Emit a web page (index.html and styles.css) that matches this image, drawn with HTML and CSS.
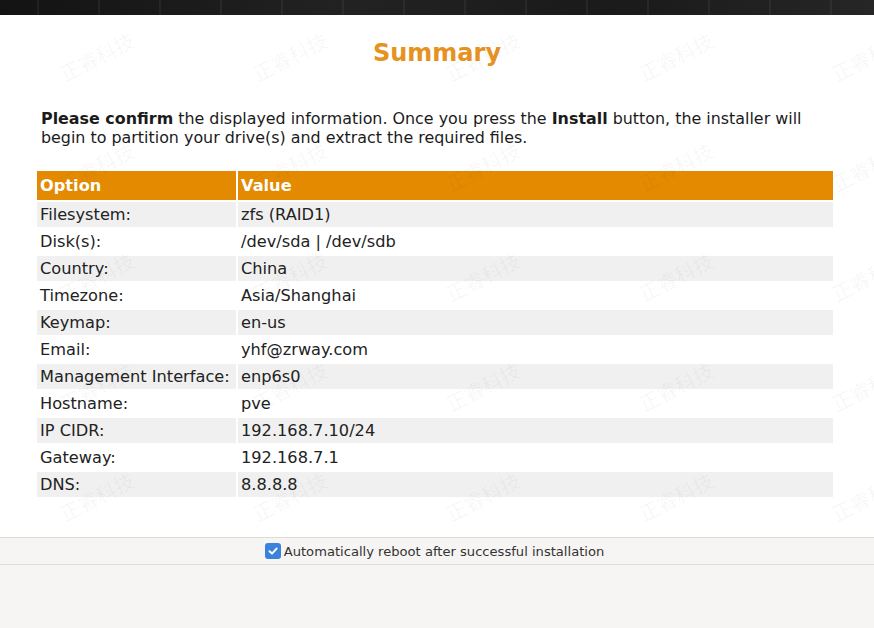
FILE: index.html
```html
<!DOCTYPE html>
<html lang="en">

<head>
    <meta charset="UTF-8">
    <meta name="viewport" content="width=device-width, initial-scale=1.0">
    <title>Summary</title>
    <link rel="stylesheet" href="styles.css">
</head>

<body>
    <div class="topbar"></div>

    <main class="content">
        <h1 class="title">Summary</h1>
        <p class="intro">
            <b>Please confirm</b> the displayed information. Once you press the <b>Install</b> button, the installer will
            begin to partition your drive(s) and extract the required files.
        </p>

        <table class="summary">
            <thead>
                <tr>
                    <th class="opt">Option</th>
                    <th>Value</th>
                </tr>
            </thead>
            <tbody>
                <tr><td>Filesystem:</td><td>zfs (RAID1)</td></tr>
                <tr><td>Disk(s):</td><td>/dev/sda | /dev/sdb</td></tr>
                <tr><td>Country:</td><td>China</td></tr>
                <tr><td>Timezone:</td><td>Asia/Shanghai</td></tr>
                <tr><td>Keymap:</td><td>en-us</td></tr>
                <tr><td>Email:</td><td>yhf@zrway.com</td></tr>
                <tr><td>Management Interface:</td><td>enp6s0</td></tr>
                <tr><td>Hostname:</td><td>pve</td></tr>
                <tr><td>IP CIDR:</td><td>192.168.7.10/24</td></tr>
                <tr><td>Gateway:</td><td>192.168.7.1</td></tr>
                <tr><td>DNS:</td><td>8.8.8.8</td></tr>
            </tbody>
        </table>
    </main>

    <footer class="footer">
        <label class="reboot">
            <span class="check">
                <svg width="12" height="12" viewBox="0 0 12 12">
                    <path d="M2.5 6.3 L5 8.6 L9.6 3.6" fill="none" stroke="#fff" stroke-width="2" stroke-linecap="round" stroke-linejoin="round"/>
                </svg>
            </span>
            Automatically reboot after successful installation
        </label>
        <div class="footer-rest"></div>
    </footer>

    <div class="watermarks"></div>

    <script>
        // watermark grid, 5 x 5
        const marks = document.querySelector(".watermarks")
        for (let i = 0; i < 25; i++) {
            const span = document.createElement("span")
            span.textContent = "正睿科技"
            marks.append(span)
        }
    </script>
</body>

</html>
```

FILE: styles.css
```css
* {
    box-sizing: border-box;
}

body {
    margin: 0;
    width: 874px;
    height: 628px;
    overflow: hidden;
    position: relative;

    display: flex;
    flex-direction: column;

    font-family: "DejaVu Sans", "Noto Sans CJK SC", sans-serif;
    color: #1b1b1b;
    background: #fff;
}

.topbar {
    height: 15px;
    flex-shrink: 0;
    background:
        repeating-linear-gradient(90deg, transparent 0 37px, rgba(255, 255, 255, 0.05) 37px 39px, transparent 39px 61px),
        linear-gradient(90deg, #131313, #222 40%, #1a1a1a 70%, #262626);
}

.content {
    flex: 1;
    background: #fff;
}

.title {
    margin: 23px 0 0;
    text-align: center;
    font-size: 24px;
    line-height: 30px;
    font-weight: bold;
    color: #e6921f;
}

.intro {
    margin: 41px 40px 0 41px;
    font-size: 15.9px;
    line-height: 19px;
}

.summary {
    margin: 22px 0 0 35px;
    width: 800px;
    border-collapse: separate;
    border-spacing: 2px;
    font-size: 16.2px;
}

.summary th,
.summary td {
    text-align: left;
    padding: 0 3px;
}

.summary th {
    height: 29px;
    background: #e38a00;
    color: #fff;
    font-weight: bold;
}

.summary .opt {
    width: 199px;
}

.summary td {
    height: 25px;
    color: #222;
}

.summary tbody tr:nth-child(odd) td {
    background: #f0f0f0;
}

.footer {
    height: 91px;
    flex-shrink: 0;
    background: #f6f5f3;
    border-top: 1px solid #dedbd6;
    display: flex;
    flex-direction: column;
}

.reboot {
    height: 27px;
    border-bottom: 1px solid #e0ddd8;

    display: flex;
    align-items: center;
    justify-content: center;
    gap: 3px;
    padding-right: 5px;

    font-size: 13.1px;
    color: #333;
}

.check {
    width: 16px;
    height: 16px;
    border-radius: 3px;
    background: #3a82dc;

    display: flex;
    align-items: center;
    justify-content: center;
}

.footer-rest {
    flex: 1;
}

.watermarks {
    position: absolute;
    top: 1px;
    left: 0;
    right: 0;
    height: 550px;
    overflow: hidden;
    pointer-events: none;

    display: grid;
    grid-template-columns: repeat(5, 193px);
    grid-template-rows: repeat(5, 110px);
}

.watermarks span {
    display: flex;
    align-items: center;
    justify-content: center;

    font-family: "Noto Sans CJK SC", sans-serif;
    font-size: 20px;
    color: rgba(0, 0, 0, 0.045);
    transform: rotate(-27deg);
    white-space: nowrap;
}
```
